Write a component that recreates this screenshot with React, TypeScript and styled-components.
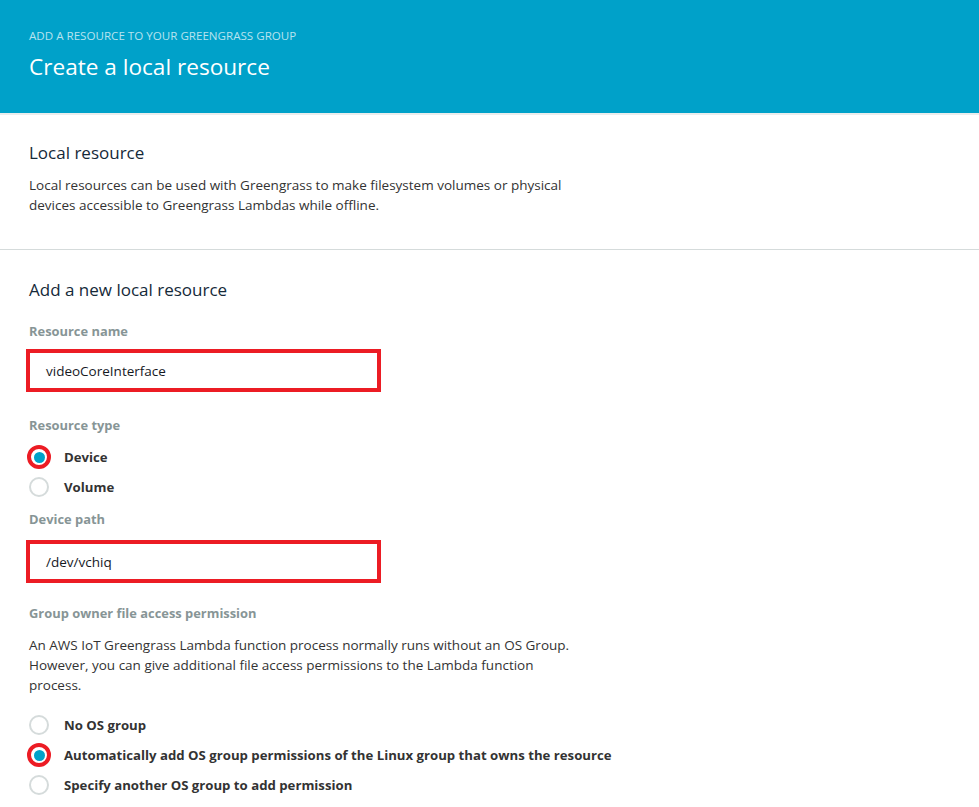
import React from "react";
import styled, { createGlobalStyle } from "styled-components";

const Global = createGlobalStyle`
  html, body { margin: 0; padding: 0; background: #ffffff; }
  body { font-family: "Open Sans", "Liberation Sans", sans-serif; color: #16191f; }
  * { box-sizing: border-box; }
`;

const Page = styled.div`
  width: 979px;
  min-height: 807px;
  background: #fff;
`;

const Header = styled.header`
  background: #00a1c9;
  height: 115px;
  padding: 29px 29px 0;
  border-bottom: 2px solid #eaeded;
`;

const Eyebrow = styled.div`
  font-size: 11.6px;
  line-height: 14px;
  color: #b7e3ef;
`;

const Title = styled.h1`
  margin: 9px 0 0;
  font-size: 22.6px;
  line-height: 30px;
  font-weight: 400;
  color: #ffffff;
`;

const Section = styled.section<{ $divider?: boolean }>`
  padding: ${(p) => (p.$divider ? "26px 29px 34px" : "28px 29px 0")};
  border-bottom: ${(p) => (p.$divider ? "1px solid #d5dbdb" : "none")};
`;

const Heading = styled.h2`
  margin: 0;
  font-size: 17px;
  line-height: 24px;
  font-weight: 400;
  color: #152939;
`;

const Paragraph = styled.p<{ $top?: number }>`
  margin: ${(p) => p.$top ?? 10}px 0 0;
  font-size: 13.5px;
  line-height: 20px;
  color: #333;
  max-width: 550px;
`;

const Label = styled.div<{ $top?: number }>`
  margin-top: ${(p) => p.$top ?? 0}px;
  font-size: 12.9px;
  line-height: 20px;
  font-weight: 700;
  color: #879596;
`;

const Input = styled.div<{ $top?: number }>`
  margin-top: ${(p) => p.$top ?? 11}px;
  width: 349px;
  height: 37px;
  border: 1px solid #aab7b8;
  outline: 4px solid #ec1c24;
  outline-offset: -1px;
  padding: 0 16px;
  display: flex;
  align-items: center;
  font-size: 13.5px;
  color: #16191f;
`;

const RadioList = styled.div<{ $top?: number }>`
  margin-top: ${(p) => p.$top ?? 12}px;
  display: flex;
  flex-direction: column;
  gap: 10px;
`;

const RadioRow = styled.div`
  display: flex;
  align-items: center;
  height: 20px;
`;

const RadioSlot = styled.span`
  width: 20px;
  height: 20px;
  margin-right: 15px;
  display: inline-flex;
  align-items: center;
  justify-content: center;
  flex: none;
`;

const RadioRing = styled.span<{ $checked?: boolean }>`
  width: ${(p) => (p.$checked ? 24 : 20)}px;
  height: ${(p) => (p.$checked ? 24 : 20)}px;
  border-radius: 50%;
  flex: none;
  border: ${(p) => (p.$checked ? "4px solid #ec1c24" : "2px solid #d5dbdb")};
  background: #fff;
  display: flex;
  align-items: center;
  justify-content: center;
  &::after {
    content: "";
    display: ${(p) => (p.$checked ? "block" : "none")};
    width: 11px;
    height: 11px;
    border-radius: 50%;
    background: #00a1c9;
  }
`;

const RadioText = styled.span`
  font-size: 13.2px;
  font-weight: 700;
  color: #333;
`;

function Radio({ label, checked }: { label: string; checked?: boolean }) {
  return (
    <RadioRow>
      <RadioSlot>
        <RadioRing $checked={checked} />
      </RadioSlot>
      <RadioText>{label}</RadioText>
    </RadioRow>
  );
}

export default function App() {
  return (
    <Page>
      <Global />
      <Header>
        <Eyebrow>ADD A RESOURCE TO YOUR GREENGRASS GROUP</Eyebrow>
        <Title>Create a local resource</Title>
      </Header>
      <Section $divider>
        <Heading>Local resource</Heading>
        <Paragraph>
          Local resources can be used with Greengrass to make filesystem volumes or physical
          devices accessible to Greengrass Lambdas while offline.
        </Paragraph>
      </Section>
      <Section>
        <Heading>Add a new local resource</Heading>
        <Label $top={19}>Resource name</Label>
        <Input>videoCoreInterface</Input>
        <Label $top={26}>Resource type</Label>
        <RadioList>
          <Radio label="Device" checked />
          <Radio label="Volume" />
        </RadioList>
        <Label $top={12}>Device path</Label>
        <Input $top={14}>/dev/vchiq</Input>
        <Label $top={23}>Group owner file access permission</Label>
        <Paragraph $top={12}>
          An AWS IoT Greengrass Lambda function process normally runs without an OS Group.
          However, you can give additional file access permissions to the Lambda function
          process.
        </Paragraph>
        <RadioList $top={20}>
          <Radio label="No OS group" />
          <Radio label="Automatically add OS group permissions of the Linux group that owns the resource" checked />
          <Radio label="Specify another OS group to add permission" />
        </RadioList>
      </Section>
    </Page>
  );
}
